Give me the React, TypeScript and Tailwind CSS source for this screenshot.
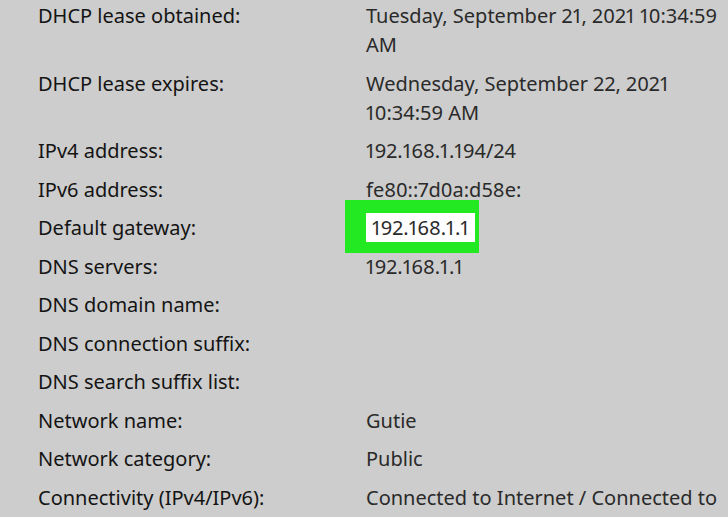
const rows: { label: string; value: string; highlight?: boolean }[] = [
  { label: 'DHCP lease obtained:', value: 'Tuesday, September 21, 2021 10:34:59 AM' },
  { label: 'DHCP lease expires:', value: 'Wednesday, September 22, 2021 10:34:59 AM' },
  { label: 'IPv4 address:', value: '192.168.1.194/24' },
  { label: 'IPv6 address:', value: 'fe80::7d0a:d58e:' },
  { label: 'Default gateway:', value: '192.168.1.1', highlight: true },
  { label: 'DNS servers:', value: '192.168.1.1' },
  { label: 'DNS domain name:', value: '' },
  { label: 'DNS connection suffix:', value: '' },
  { label: 'DNS search suffix list:', value: '' },
  { label: 'Network name:', value: 'Gutie' },
  { label: 'Network category:', value: 'Public' },
  { label: 'Connectivity (IPv4/IPv6):', value: 'Connected to Internet / Connected to Internet' },
];

export default function App() {
  return (
    <div
      className="h-[517px] w-[728px] overflow-hidden bg-[#cdcdcd] pl-[38px] pt-[1px]"
      style={{ fontFamily: '"Noto Sans", "Open Sans", sans-serif' }}
    >
      <div className="grid grid-cols-[328px_362px] gap-y-[9.5px] text-[20px] leading-[29px]">
        {rows.map((r) => (
          <div key={r.label} className="contents">
            <div className="text-[#141414]">{r.label}</div>
            <div className="relative text-[#2a2a2a] proportional-nums">
              {r.highlight ? (
                <>
                  <div className="absolute left-[-21px] top-[-13px] h-[53px] w-[134px] bg-[#22e922]" />
                  <span className="relative bg-white px-[6px] py-[1px]">{r.value}</span>
                </>
              ) : (
                r.value
              )}
            </div>
          </div>
        ))}
      </div>
    </div>
  );
}
